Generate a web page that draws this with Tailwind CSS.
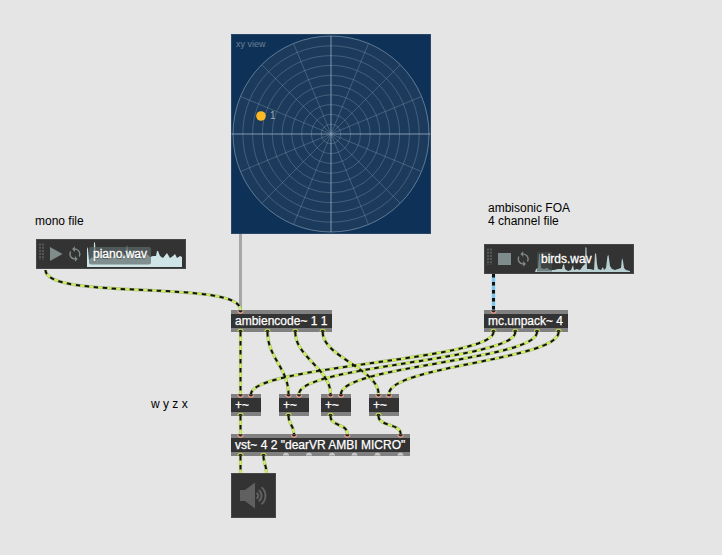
<!DOCTYPE html>
<html lang="en">
<head>
<meta charset="utf-8">
<title>Ambisonics patch</title>
<script src="https://cdn.jsdelivr.net/npm/@tailwindcss/browser@4"></script>
</head>
<body class="bg-[#e5e5e5]">
<main class="relative w-[722px] h-[555px] overflow-hidden bg-[#e5e5e5] font-['Liberation_Sans',Arial,sans-serif] text-[12px] leading-[13px] text-black">

  <!-- comments -->
  <p class="absolute left-[35px] top-[215px] whitespace-nowrap">mono file</p>
  <p class="absolute left-[488px] top-[202px] whitespace-nowrap">ambisonic FOA<br>4 channel file</p>
  <p class="absolute left-[151px] top-[398px] whitespace-nowrap">w y z x</p>

  <!-- xy view -->
  <section class="absolute left-[231px] top-[34px] w-[200px] h-[200px] bg-[#0e3157]">
    <svg class="block" width="200" height="200" viewBox="0 0 200 200" fill="none" stroke="#a9bdd0" stroke-opacity=".27">
      <circle cx="100" cy="100" r="98" fill="#1c3b5c" stroke-opacity=".5"/>
      <circle cx="100" cy="100" r="88.2"/><circle cx="100" cy="100" r="78.4"/><circle cx="100" cy="100" r="68.6"/>
      <circle cx="100" cy="100" r="58.8"/><circle cx="100" cy="100" r="49"/><circle cx="100" cy="100" r="39.2"/>
      <circle cx="100" cy="100" r="29.4"/><circle cx="100" cy="100" r="19.6"/><circle cx="100" cy="100" r="9.8"/>
      <path d="M62.5 9.5L137.5 190.5M137.5 9.5L62.5 190.5M30.7 30.7L169.3 169.3M169.3 30.7L30.7 169.3M9.5 62.5L190.5 137.5M9.5 137.5L190.5 62.5"/>
      <path d="M0 100H200M100 2V198" stroke-width="2" stroke-opacity=".36"/>
      <rect x=".5" y=".5" width="199" height="199" stroke="#3d5574" stroke-opacity=".6"/>
      <circle cx="30" cy="82" r="4.8" fill="#fdb924" stroke="none"/>
    </svg>
    <span class="absolute left-[5px] top-[4px] text-[9px] leading-[12px] text-[#6d8094]">xy view</span>
    <span class="absolute left-[39px] top-[76px] text-[10px] leading-[12px] text-[#9cabb9]">1</span>
  </section>

  <!-- players -->
  <section class="absolute left-[36px] top-[239px] w-[150px] h-[30px] bg-[#333333] border border-[#444848]">
    <svg class="absolute -left-px -top-px" width="150" height="30" viewBox="0 0 150 30">
      <path d="M4 4.5V21M7 4.5V21" stroke="#626666" stroke-width="1.5" stroke-dasharray="2 1.2" fill="none"/>
      <path d="M14 8L26.5 15L14 22Z" fill="#7f8c8c"/>
      <path transform="translate(30.5 6.6) scale(.7)" fill="#7f8c8c" d="M12 4V1L8 5l4 4V6c3.31 0 6 2.69 6 6 0 1.01-.25 1.97-.7 2.8l1.46 1.46C19.54 15.03 20 13.57 20 12c0-4.42-3.58-8-8-8zm0 14c-3.31 0-6-2.69-6-6 0-1.01.25-1.97.7-2.8L5.24 7.74C4.46 8.97 4 10.43 4 12c0 4.42 3.58 8 8 8v3l4-4-4-4v3z"/>
      <path d="M51 28V8L52 10L53 21L54 20L56 18L57.5 20L58 3L59 4L60 18L62 14L65 16L69 17L72 15L76 18L80 16L84 18L88 15L90 17L91 6L92 13L94 16L98 14L102 17L106 17L109 16L111 15L114 18L117 17L120 17L121 12L122 12L124 17L127 19L131 14L134 19L137 17L139 15L141 19L144 17L146 18V28Z" fill="#cfe4e7"/>
      <rect x="53" y="8" width="62" height="17.5" rx="2" fill="#5d6969" fill-opacity=".7"/>
    </svg>
    <span class="absolute left-[56px] top-[8px] text-[12px] leading-[13px] text-white [-webkit-text-stroke:0.3px_white] [text-shadow:0_1px_1px_#333]">piano.wav</span>
  </section>
  <section class="absolute left-[484px] top-[244px] w-[150px] h-[30px] bg-[#333333] border border-[#444848]">
    <svg class="absolute -left-px -top-px" width="150" height="30" viewBox="0 0 150 30">
      <path d="M4 4.5V21M7 4.5V21" stroke="#626666" stroke-width="1.5" stroke-dasharray="2 1.2" fill="none"/>
      <rect x="14" y="9" width="13" height="12" fill="#7f8c8c"/>
      <path transform="translate(30.8 6.6) scale(.7)" fill="#7f8787" d="M12 4V1L8 5l4 4V6c3.31 0 6 2.69 6 6 0 1.01-.25 1.97-.7 2.8l1.46 1.46C19.54 15.03 20 13.57 20 12c0-4.42-3.58-8-8-8zm0 14c-3.31 0-6-2.69-6-6 0-1.01.25-1.97.7-2.8L5.24 7.74C4.46 8.97 4 10.43 4 12c0 4.42 3.58 8 8 8v3l4-4-4-4v3z"/>
      <path d="M51 28L52 25L54 24L55 10L56 10L57 24L60 25L63 24L66 26L70 26L74 25L78 25L79 21L80 20L81 25L84 27L87 26L89 21L90 26L93 25L96 26L99 22L101 20L101.5 3L102.5 4L103 25L106 25L110 26L111 10L112 9L113 20L114 25L117 26L119 23L120 26L122 24L123.5 12L124.5 11L126 22L128 25L131 26L134 25L137 24L138 14L139 17L140 24L142 26L146 27V28Z" fill="#b9d0d3"/>
      <rect x="53" y="8" width="15" height="19.5" fill="#465050" fill-opacity=".6"/>
    </svg>
    <span class="absolute left-[56px] top-[8px] text-[12px] leading-[13px] text-white [-webkit-text-stroke:0.3px_white] [text-shadow:0_1px_1px_#333]">birds.wav</span>
  </section>

  <!-- objects -->
  <div class="absolute left-[231px] top-[310px] w-[101px] h-[22px] border-y-4 border-[#808080] bg-[#333333] pl-[4px] leading-[14px] text-white whitespace-nowrap [-webkit-text-stroke:0.25px_white]">ambiencode~ 1 1</div>
  <div class="absolute left-[484px] top-[310px] w-[84px] h-[22px] border-y-4 border-[#808080] bg-[#333333] pl-[4px] leading-[14px] text-white whitespace-nowrap [-webkit-text-stroke:0.25px_white]">mc.unpack~ 4</div>
  <div class="absolute left-[231px] top-[394px] w-[30px] h-[22px] border-y-4 border-[#808080] bg-[#333333] pl-[4px] leading-[15px] text-white [-webkit-text-stroke:0.25px_white]">+~</div>
  <div class="absolute left-[279px] top-[394px] w-[30px] h-[22px] border-y-4 border-[#808080] bg-[#333333] pl-[4px] leading-[15px] text-white [-webkit-text-stroke:0.25px_white]">+~</div>
  <div class="absolute left-[321px] top-[394px] w-[30px] h-[22px] border-y-4 border-[#808080] bg-[#333333] pl-[4px] leading-[15px] text-white [-webkit-text-stroke:0.25px_white]">+~</div>
  <div class="absolute left-[369px] top-[394px] w-[30px] h-[22px] border-y-4 border-[#808080] bg-[#333333] pl-[4px] leading-[15px] text-white [-webkit-text-stroke:0.25px_white]">+~</div>
  <div class="absolute left-[231px] top-[434px] w-[179px] h-[22px] border-y-4 border-[#808080] bg-[#333333] pl-[4px] leading-[14px] text-white whitespace-nowrap [-webkit-text-stroke:0.25px_white]">vst~ 4 2 "dearVR AMBI MICRO"</div>
  <div class="absolute left-[231px] top-[473px] w-[45px] h-[45px] bg-[#333333] border border-[#444848]">
    <svg class="absolute -left-px -top-px" width="45" height="45" viewBox="0 0 45 45">
      <path d="M9 17H14L24 9.5V35.5L14 28H9Z" fill="#606060"/>
      <path d="M25.5 20A3 3 0 0 1 25.5 25.5M27.8 17.2A7 7 0 0 1 27.8 28.3M30.5 14.3A11 11 0 0 1 30.5 31.2" fill="none" stroke="#606060" stroke-width="2"/>
    </svg>
  </div>

  <!-- patch cords and ports -->
  <svg class="absolute left-0 top-0" width="722" height="555" viewBox="0 0 722 555" fill="none">
    <defs>
      <g id="cords">
        <path d="M45.5 270C45.5 301 240.5 279 240.5 310"/>
        <path d="M240.5 332V394"/>
        <path d="M267.5 332C267.5 357 288.5 369 288.5 394"/>
        <path d="M295.3 332C295.3 357 330.5 369 330.5 394"/>
        <path d="M322.7 332C322.7 357 378.5 369 378.5 394"/>
        <path d="M493.5 332C493.5 360 251 366 251 394"/>
        <path d="M515.3 332C515.3 360 299 366 299 394"/>
        <path d="M537 332C537 360 341 366 341 394"/>
        <path d="M558.6 332C558.6 360 389 366 389 394"/>
        <path d="M240.5 416V434"/>
        <path d="M288.5 416C288.5 424 294 426 294 434"/>
        <path d="M330.5 416C330.5 427 347.3 423 347.3 434"/>
        <path d="M378.5 416C378.5 427 400.6 423 400.6 434"/>
        <path d="M240.5 456V473"/>
        <path d="M263.5 456C263.5 463 266.5 466 266.5 473"/>
      </g>
      <path id="in" d="M-2.6 0A2.6 2.6 0 0 0 2.6 0"/>
      <path id="out" d="M-2.6 0A2.6 2.6 0 0 1 2.6 0"/>
    </defs>
    <path d="M240.5 234V310" stroke="#a6a6a6" stroke-width="3"/>
    <use href="#cords" stroke="#a9b08c" stroke-width="3.2"/>
    <use href="#cords" stroke="#cdf25c" stroke-width="2.2"/>
    <use href="#cords" stroke="#111" stroke-width="2" stroke-dasharray="4.5 4.5"/>
    <path d="M493.5 274V310" stroke="#78c8f0" stroke-width="3.4"/>
    <path d="M493.5 274V310" stroke="#111" stroke-width="3" stroke-dasharray="3.5 4.5"/>

    <g fill="#222" stroke="#f2a08c" stroke-width="1.1">
      <use href="#in" x="240.5" y="310.5"/><use href="#in" x="493.5" y="310.5"/>
      <use href="#in" x="240.5" y="394.5"/><use href="#in" x="251" y="394.5"/>
      <use href="#in" x="288.5" y="394.5"/><use href="#in" x="299" y="394.5"/>
      <use href="#in" x="330.5" y="394.5"/><use href="#in" x="341" y="394.5"/>
      <use href="#in" x="378.5" y="394.5"/><use href="#in" x="389" y="394.5"/>
      <use href="#in" x="240.5" y="434.5"/><use href="#in" x="294" y="434.5"/>
      <use href="#in" x="347.3" y="434.5"/><use href="#in" x="400.6" y="434.5"/>
    </g>
    <g fill="#222" stroke="#c9d94a" stroke-width="1.1">
      <use href="#out" x="240.5" y="331.8"/><use href="#out" x="267.5" y="331.8"/>
      <use href="#out" x="295.3" y="331.8"/><use href="#out" x="322.7" y="331.8"/>
      <use href="#out" x="493.5" y="331.8"/><use href="#out" x="515.3" y="331.8"/>
      <use href="#out" x="537" y="331.8"/><use href="#out" x="558.6" y="331.8"/>
      <use href="#out" x="240.5" y="415.8"/><use href="#out" x="288.5" y="415.8"/>
      <use href="#out" x="330.5" y="415.8"/><use href="#out" x="378.5" y="415.8"/>
      <use href="#out" x="240.5" y="455.8"/><use href="#out" x="263.5" y="455.8"/>
    </g>
    <g fill="#c8c8c8" stroke="#c8c8c8" stroke-width=".8">
      <use href="#out" x="286" y="455.6"/><use href="#out" x="309" y="455.6"/><use href="#out" x="332" y="455.6"/>
      <use href="#out" x="354.5" y="455.6"/><use href="#out" x="377.5" y="455.6"/><use href="#out" x="400.5" y="455.6"/>
    </g>
  </svg>
</main>
</body>
</html>
